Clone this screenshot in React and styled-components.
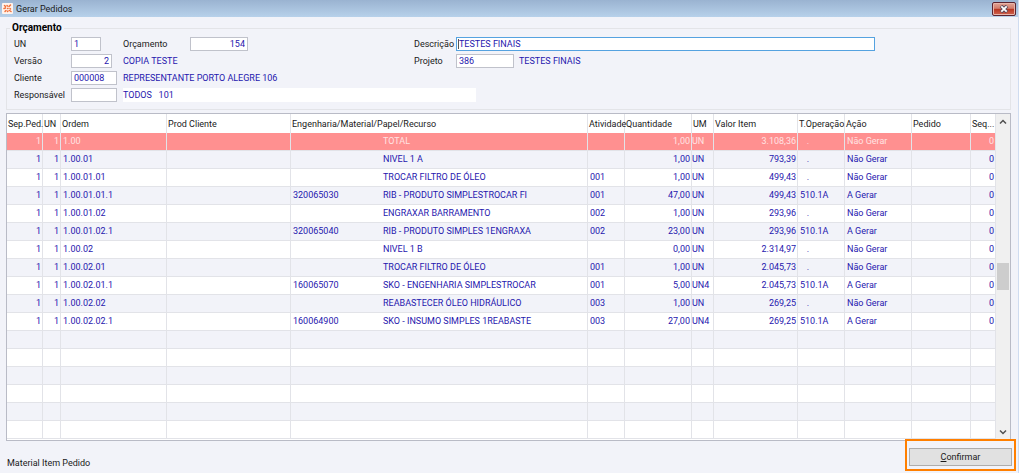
import React from 'react';
import styled, { createGlobalStyle, css } from 'styled-components';

const GlobalStyle = createGlobalStyle`
  * {
    box-sizing: border-box;
  }
  body {
    margin: 0;
    background: #f2f3f9;
  }
  body, input, button {
    font-family: Roboto, "Noto Sans", sans-serif;
    font-size: 9px;
    line-height: 14px;
    color: #1a1a1a;
  }
`;

const Window = styled.div`
  min-height: 100vh;
  display: flex;
  flex-direction: column;
  background: #f2f3f9;
  border-right: 1px solid #cfdcf0;
  border-bottom: 1px solid #35cde4;
`;

const TitleBar = styled.header`
  display: flex;
  align-items: center;
  height: 17px;
  padding: 0 2px;
  background: linear-gradient(#9ab3d1, #b7d1ea);
`;

const Title = styled.h1`
  flex: 1;
  margin: 0 0 0 3px;
  font-size: 9px;
  font-weight: normal;
`;

const CloseButton = styled.button`
  display: flex;
  align-items: center;
  justify-content: center;
  width: 24px;
  height: 14px;
  padding: 0;
  border: 1px solid #5c2430;
  border-radius: 2px;
  background: linear-gradient(#e2a596 0%, #d27c6c 45%, #b8341f 50%, #cf6450 100%);
  box-shadow: inset 0 0 0 1px #e8b5aa;
`;

const Group = styled.fieldset`
  display: flex;
  flex-direction: column;
  gap: 3px;
  margin: 5px 7px 3px 6px;
  padding: 3px 6px 7px;
  border: 1px solid #e3e4e8;
`;

const Legend = styled.legend`
  padding: 0 2px;
  margin-left: -3px;
  font-size: 10px;
  line-height: 12px;
  font-weight: bold;
  color: #000;
`;

const Row = styled.div`
  display: flex;
  align-items: center;
  height: 14px;
`;

const Left = styled.div`
  display: flex;
  align-items: center;
  flex: 0 0 400px;
  padding-left: 1px;
`;

const Right = styled.div`
  display: flex;
  align-items: center;
  flex: 1;
  padding-left: 1px;
`;

const Label = styled.label`
  flex: none;
  width: ${(p) => p.$w}px;
`;

const Slot = styled.div`
  flex: none;
  display: flex;
  width: ${(p) => p.$w}px;
`;

const Field = styled.input`
  width: ${(p) => p.$w};
  height: 14px;
  padding: 0 2px;
  border: 1px solid #c0c2cb;
  outline: none;
  background: #fff;
  color: #1f17ae;
  text-align: ${(p) => (p.$right ? 'right' : 'left')};
  ${(p) =>
    p.$active &&
    css`
      border-color: #55a2e0;
      background: linear-gradient(#555, #555) 1px 1px / 1px 10px no-repeat #fff;
    `}
`;

const Value = styled.span`
  color: #1f17ae;
  white-space: pre;
  ${(p) =>
    p.$filled &&
    css`
      flex: 0 0 353px;
      background: #fff;
    `}
`;

const GridBox = styled.div`
  display: flex;
  margin: 0 7px 0 6px;
  padding-bottom: 1px;
  border: 1px solid #b9bbc6;
  background: #fff;
`;

const Table = styled.table`
  flex: 1;
  width: 0;
  table-layout: fixed;
  border-collapse: separate;
  border-spacing: 0;
`;

const Th = styled.th`
  height: 19px;
  padding: 1px 0 0 1px;
  border-right: 1px solid #e2e3e8;
  font-weight: normal;
  text-align: left;
  white-space: nowrap;
`;

const Td = styled.td`
  height: 18px;
  padding: 0 1px 1px ${(p) => (p.$tight ? 0 : 2)}px;
  border-right: 1px solid #e2e3e8;
  border-bottom: 1px solid #e2e3e8;
  text-align: ${(p) => (p.$right ? 'right' : 'left')};
  white-space: pre;
`;

const Tr = styled.tr`
  color: #1f17ae;
  background: #fff;
  &:nth-child(even) {
    background: #f2f3f9;
  }
  ${(p) =>
    p.$selected &&
    css`
      color: #ffe3e3;
      background: #ff9090;
    `}
`;

const Code = styled.span`
  display: inline-block;
  width: 90px;
`;

const ScrollBar = styled.div`
  flex: none;
  display: grid;
  grid-template-rows: 16px 133fr 27px 135fr 14px;
  width: 14px;
  padding: 0 1px;
  background: #f0f0f0;
`;

const ScrollButton = styled.button`
  grid-row: ${(p) => p.$row};
  display: flex;
  align-items: center;
  justify-content: center;
  padding: 0;
  border: 0;
  background: none;
`;

const Thumb = styled.div`
  grid-row: 3;
  background: #cdcdcd;
`;

const Footer = styled.footer`
  flex: 1;
  display: flex;
  align-items: flex-start;
  justify-content: space-between;
  padding: 7px 6px 5px 7px;
`;

const Status = styled.span`
  margin-top: 8px;
`;

const Highlight = styled.div`
  position: relative;
  &::after {
    content: "";
    position: absolute;
    inset: -9px -4px -5px;
    border: 2px solid #ff7f00;
    pointer-events: none;
  }
`;

const ConfirmButton = styled.button`
  display: block;
  width: 103px;
  height: 18px;
  padding: 0;
  border: 1px solid #adadad;
  background: #e1e1e1;
`;

const columns = [
  { title: 'Sep.Ped.', width: 36 },
  { title: 'UN', width: 18 },
  { title: 'Ordem', width: 106 },
  { title: 'Prod Cliente', width: 124 },
  { title: 'Engenharia/Material/Papel/Recurso' },
  { title: 'Atividade', width: 37 },
  { title: 'Quantidade', width: 67 },
  { title: 'UM', width: 22 },
  { title: 'Valor Item', width: 84 },
  { title: 'T.Operação', width: 47 },
  { title: 'Ação', width: 67 },
  { title: 'Pedido', width: 59 },
  { title: 'Seq...', width: 25 },
];

// ordem, código, descrição, atividade, quantidade, UM, valor, operação, ação
const items = [
  ['1.00', '', 'TOTAL', '', '1,00', 'UN', '3.108,36', '', 'Não Gerar'],
  ['1.00.01', '', 'NIVEL 1 A', '', '1,00', 'UN', '793,39', '', 'Não Gerar'],
  ['1.00.01.01', '', 'TROCAR FILTRO DE ÓLEO', '001', '1,00', 'UN', '499,43', '', 'Não Gerar'],
  ['1.00.01.01.1', '320065030', 'RIB - PRODUTO SIMPLESTROCAR FI', '001', '47,00', 'UN', '499,43', '510.1A', 'A Gerar'],
  ['1.00.01.02', '', 'ENGRAXAR BARRAMENTO', '002', '1,00', 'UN', '293,96', '', 'Não Gerar'],
  ['1.00.01.02.1', '320065040', 'RIB - PRODUTO SIMPLES 1ENGRAXA', '002', '23,00', 'UN', '293,96', '510.1A', 'A Gerar'],
  ['1.00.02', '', 'NIVEL 1 B', '', '0,00', 'UN', '2.314,97', '', 'Não Gerar'],
  ['1.00.02.01', '', 'TROCAR FILTRO DE ÓLEO', '001', '1,00', 'UN', '2.045,73', '', 'Não Gerar'],
  ['1.00.02.01.1', '160065070', 'SKO - ENGENHARIA SIMPLESTROCAR', '001', '5,00', 'UN4', '2.045,73', '510.1A', 'A Gerar'],
  ['1.00.02.02', '', 'REABASTECER ÓLEO HIDRÁULICO', '003', '1,00', 'UN', '269,25', '', 'Não Gerar'],
  ['1.00.02.02.1', '160064900', 'SKO - INSUMO SIMPLES 1REABASTE', '003', '27,00', 'UN4', '269,25', '510.1A', 'A Gerar'],
];

const emptyRows = [1, 2, 3, 4, 5, 6];

function AppIcon() {
  return (
    <svg width="11" height="11" viewBox="0 0 11 11">
      <rect width="11" height="11" rx="1" fill="#fff3ec" />
      <path
        d="M2.500 2.500l1 1M5 2.500l.5 .5M8.500 2l-1.500 1.500M2 5.500l1.500-.5M5.500 5.500h.5M8 5.500l.5 .5M3 8.500l1-1M5.500 8.500l.5-.5M7.500 7.500l1.500 1"
        stroke="#f0703a"
        strokeWidth="1.500"
        strokeLinecap="round"
        fill="none"
      />
    </svg>
  );
}

function CloseIcon() {
  return (
    <svg width="10" height="8" viewBox="0 0 10 8">
      <path d="M2 1l6 6M8 1L2 7" stroke="#5b4a5c" strokeWidth="3.600" />
      <path d="M2.300 1.300l5.400 5.400M7.700 1.300L2.300 6.700" stroke="#fff" strokeWidth="1.800" />
    </svg>
  );
}

function Chevron({ down }) {
  return (
    <svg width="8" height="6" viewBox="0 0 8 6">
      <path d={down ? 'M1 1.500l3 3 3-3' : 'M1 4.500l3-3 3 3'} stroke="#505050" strokeWidth="1.500" fill="none" />
    </svg>
  );
}

function Item({ item, selected }) {
  const [ordem, codigo, descricao, atividade, quantidade, um, valor, operacao, acao] = item;
  return (
    <Tr $selected={selected}>
      <Td $right>1</Td>
      <Td $right>1</Td>
      <Td>{ordem}</Td>
      <Td />
      <Td>
        <Code>{codigo}</Code>
        {descricao}
      </Td>
      <Td>{atividade}</Td>
      <Td $right>{quantidade}</Td>
      <Td $tight>{um}</Td>
      <Td $right>{valor}</Td>
      <Td>{operacao || '   .'}</Td>
      <Td>{acao}</Td>
      <Td />
      <Td $right>0</Td>
    </Tr>
  );
}

function OrderForm() {
  return (
    <Group>
      <Legend>Orçamento</Legend>
      <Row>
        <Left>
          <Label htmlFor="un" $w={57}>UN</Label>
          <Slot $w={52}><Field id="un" $w="30px" defaultValue="1" /></Slot>
          <Label htmlFor="orcamento" $w={67}>Orçamento</Label>
          <Field id="orcamento" $w="58px" $right defaultValue="154" />
        </Left>
        <Right>
          <Label htmlFor="descricao" $w={42}>Descrição</Label>
          <Field id="descricao" $w="71%" $active defaultValue="TESTES FINAIS" />
        </Right>
      </Row>
      <Row>
        <Left>
          <Label htmlFor="versao" $w={57}>Versão</Label>
          <Slot $w={52}><Field id="versao" $w="41px" $right defaultValue="2" /></Slot>
          <Value>COPIA TESTE</Value>
        </Left>
        <Right>
          <Label htmlFor="projeto" $w={42}>Projeto</Label>
          <Slot $w={63}><Field id="projeto" $w="58px" defaultValue="386" /></Slot>
          <Value>TESTES FINAIS</Value>
        </Right>
      </Row>
      <Row>
        <Left>
          <Label htmlFor="cliente" $w={57}>Cliente</Label>
          <Slot $w={52}><Field id="cliente" $w="46px" defaultValue="000008" /></Slot>
          <Value>REPRESENTANTE PORTO ALEGRE 106</Value>
        </Left>
      </Row>
      <Row>
        <Left>
          <Label htmlFor="responsavel" $w={57}>Responsável</Label>
          <Slot $w={52}><Field id="responsavel" $w="46px" /></Slot>
          <Value $filled>{'TODOS   101'}</Value>
        </Left>
      </Row>
    </Group>
  );
}

function App() {
  return (
    <>
      <GlobalStyle />
      <Window>
        <TitleBar>
          <AppIcon />
          <Title>Gerar Pedidos</Title>
          <CloseButton aria-label="Fechar"><CloseIcon /></CloseButton>
        </TitleBar>
        <OrderForm />
        <GridBox>
          <Table>
            <colgroup>
              {columns.map((c) => <col key={c.title} width={c.width} />)}
            </colgroup>
            <thead>
              <tr>
                {columns.map((c) => <Th key={c.title}>{c.title}</Th>)}
              </tr>
            </thead>
            <tbody>
              {items.map((item, i) => <Item key={item[0]} item={item} selected={i === 0} />)}
              {emptyRows.map((n) => (
                <Tr key={n}>
                  {columns.map((c) => <Td key={c.title} />)}
                </Tr>
              ))}
            </tbody>
          </Table>
          <ScrollBar>
            <ScrollButton $row={1} aria-label="Subir"><Chevron /></ScrollButton>
            <Thumb />
            <ScrollButton $row={5} aria-label="Descer"><Chevron down /></ScrollButton>
          </ScrollBar>
        </GridBox>
        <Footer>
          <Status>Material Item Pedido</Status>
          <Highlight>
            <ConfirmButton><u>C</u>onfirmar</ConfirmButton>
          </Highlight>
        </Footer>
      </Window>
    </>
  );
}

export default App;
